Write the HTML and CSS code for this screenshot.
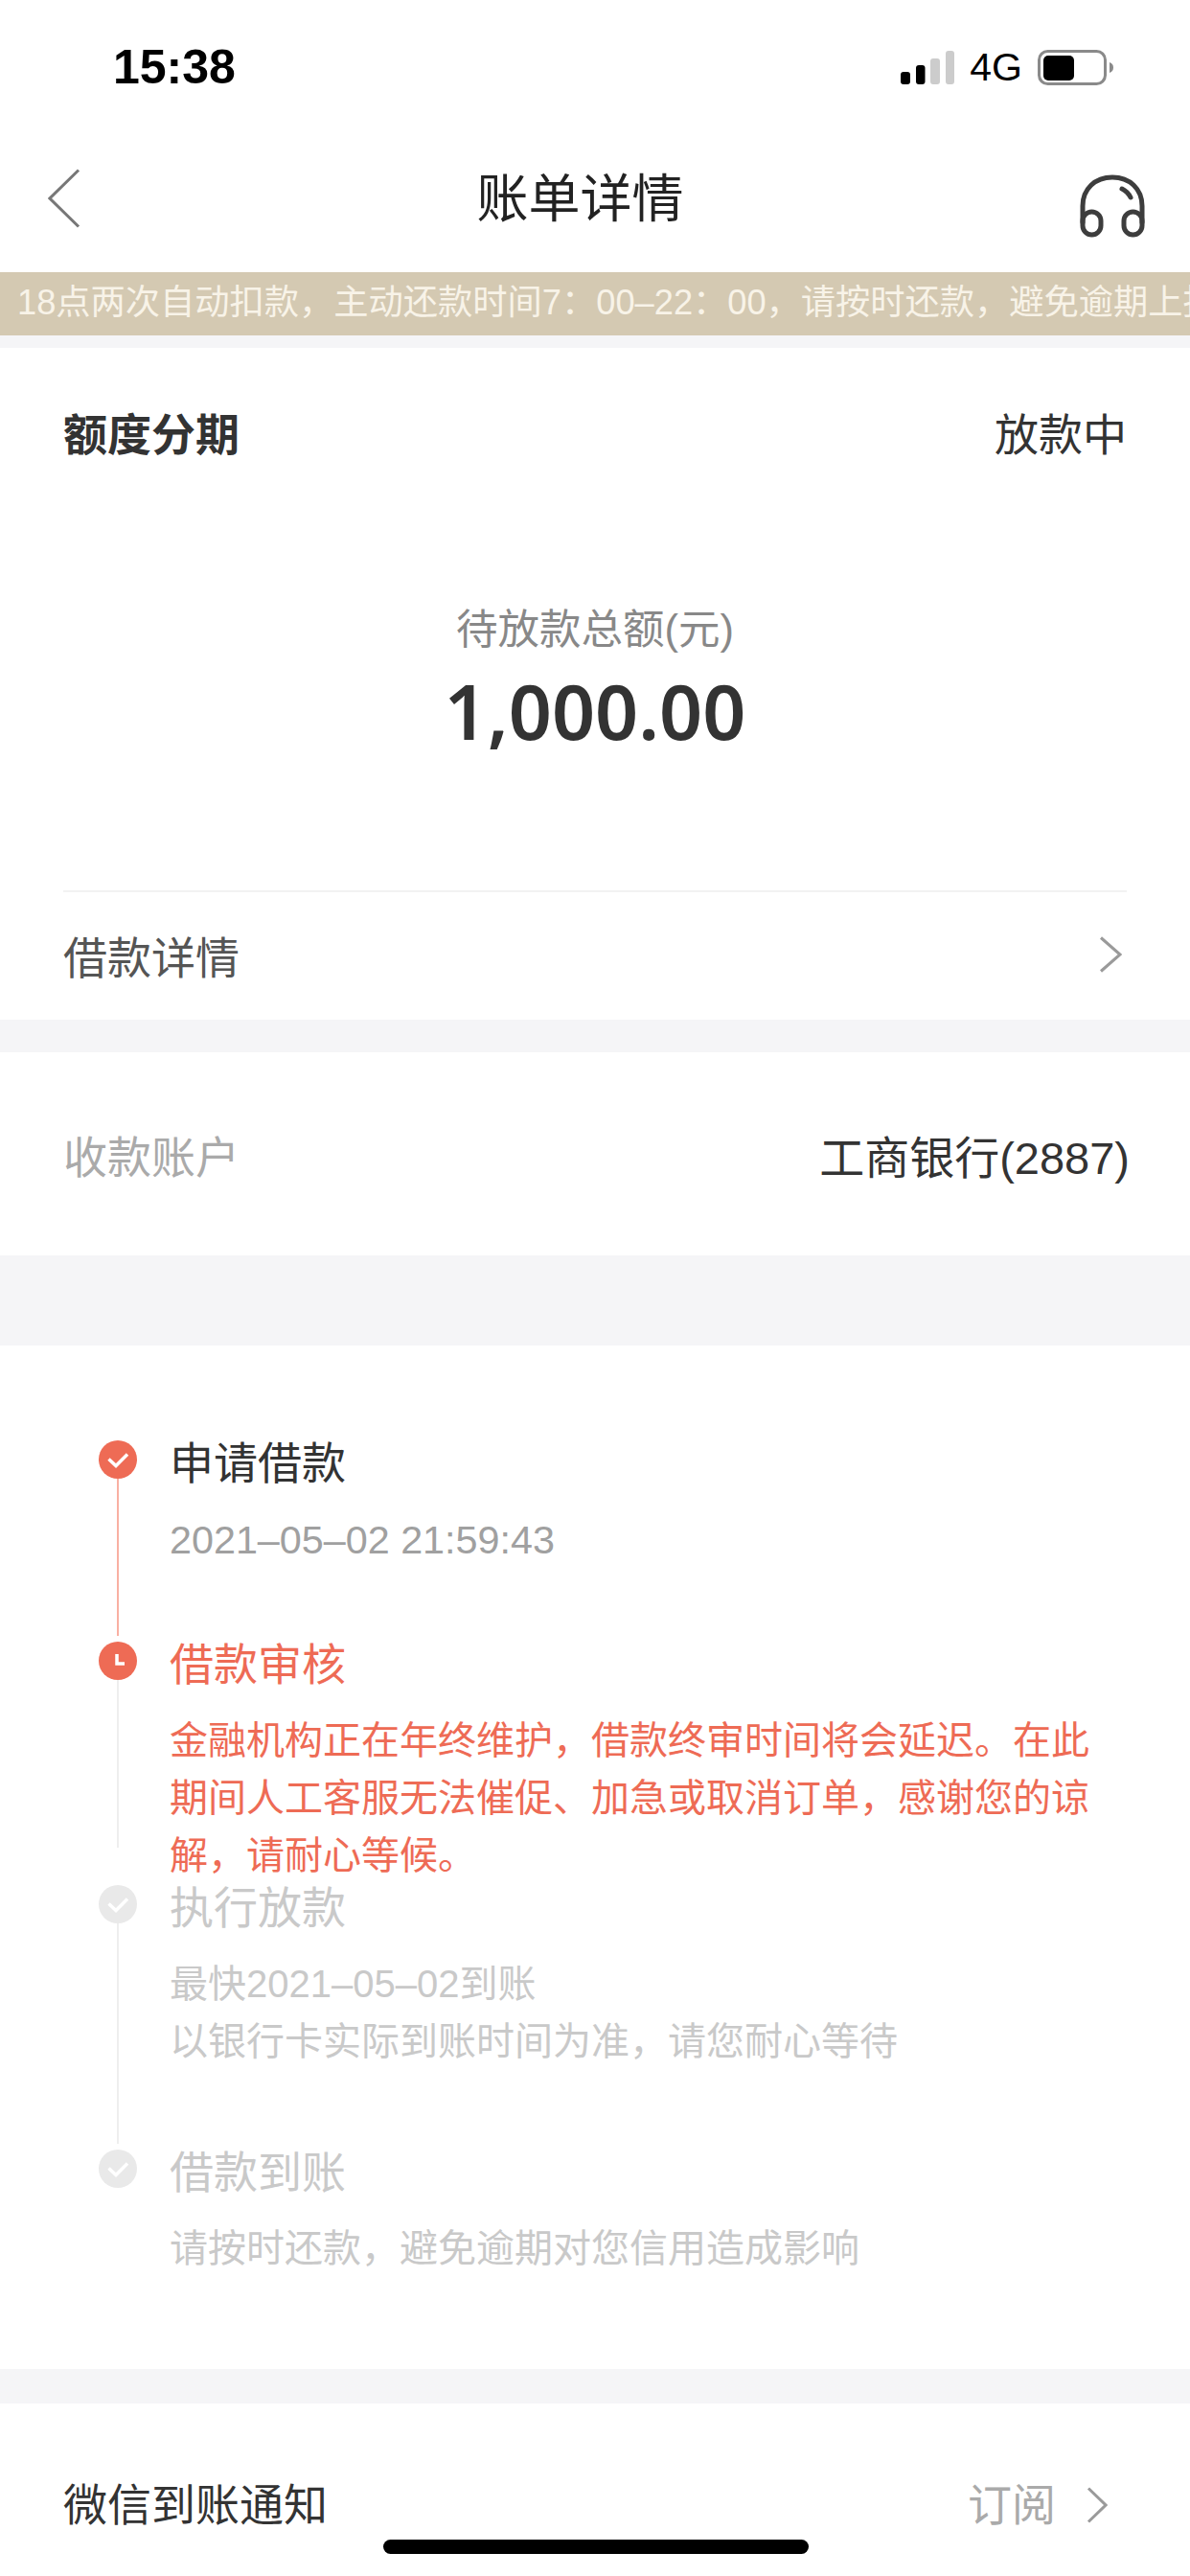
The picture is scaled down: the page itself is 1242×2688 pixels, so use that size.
FILE: index.html
```html
<!DOCTYPE html>
<html lang="zh-CN">
<head>
<meta charset="utf-8">
<title>账单详情</title>
<link rel="stylesheet" href="styles.css">
</head>
<body>
<div class="page">
  <header class="status">
    <span class="time">15:38</span>
    <div class="status-right">
      <svg class="signal" width="56" height="35" viewBox="0 0 56 35"><rect x="0" y="22" width="10" height="13" rx="3" fill="#000"/><rect x="16" y="15" width="9.5" height="20" rx="3" fill="#000"/><rect x="31" y="8" width="10" height="27" rx="3" fill="#ccc"/><rect x="47" y="0" width="9" height="35" rx="3" fill="#ccc"/></svg>
      <span class="net">4G</span>
      <svg class="battery" width="79" height="37" viewBox="0 0 79 37"><rect x="1.500" y="1.500" width="69" height="34" rx="9" fill="none" stroke="#8a8a8a" stroke-width="3"/><rect x="6" y="6" width="32" height="26" rx="5" fill="#000"/><path d="M75 13c3 1 4 3 4 5.500s-1 4.500-4 5.500z" fill="#8a8a8a"/></svg>
    </div>
  </header>
  <nav class="nav">
    <svg class="back" width="34" height="62" viewBox="0 0 34 62"><path d="M32 1.500 2 31l30 29.500" fill="none" stroke="#777" stroke-width="3"/></svg>
    <h1 class="title">账单详情</h1>
    <svg class="headset" width="68" height="66" viewBox="0 0 68 66"><g fill="none" stroke="#3d3d3d" stroke-width="5" stroke-linecap="round"><path d="M3 50V33C3 15 16 3 34 3s31 12 31 30v17"/><rect x="3" y="39" width="19" height="24" rx="9.500"/><rect x="46" y="39" width="19" height="24" rx="9.500"/><path d="M44 15c4 2 7 5 9 9"/></g></svg>
  </nav>
  <div class="notice">18点两次自动扣款，主动还款时间7：00–22：00，请按时还款，避免逾期上报</div>

  <section class="card card-main">
    <div class="row-head">
      <span class="type">额度分期</span>
      <span class="state">放款中</span>
    </div>
    <div class="summary">
      <div class="summary-label">待放款总额(元)</div>
      <div class="amount">1,000.00</div>
    </div>
    <div class="row-detail">
      <span class="detail-text">借款详情</span>
      <svg class="chev" width="24" height="38" viewBox="0 0 24 38"><path d="M2 1.500 22 19 2 36.500" fill="none" stroke="#9a9a9a" stroke-width="3"/></svg>
    </div>
  </section>

  <section class="card card-account">
    <span class="acct-label">收款账户</span>
    <span class="acct-value">工商银行(2887)</span>
  </section>

  <section class="card timeline">
    <div class="step step-1">
      <div class="rail">
        <svg class="dot" width="40" height="40" viewBox="0 0 40 40"><circle cx="20" cy="20" r="20" fill="#ee6b55"/><path d="M10.500 19.500 18 26.500 30 14.500" fill="none" stroke="#fff" stroke-width="3.500"/></svg>
        <div class="line line-on"></div>
      </div>
      <div class="body">
        <div class="step-title dark">申请借款</div>
        <div class="step-text step-date mid">2021–05–02 21:59:43</div>
      </div>
    </div>
    <div class="step step-2">
      <div class="rail">
        <svg class="dot" width="40" height="40" viewBox="0 0 40 40"><circle cx="20" cy="20" r="20" fill="#ee6b55"/><path d="M19 13v10h8" fill="none" stroke="#fff" stroke-width="3.500"/></svg>
        <div class="line line-off line-short"></div>
      </div>
      <div class="body">
        <div class="step-title orange">借款审核</div>
        <div class="step-text orange">金融机构正在年终维护，借款终审时间将会延迟。在此期间人工客服无法催促、加急或取消订单，感谢您的谅解，请耐心等候。</div>
      </div>
    </div>
    <div class="step step-3">
      <div class="rail">
        <svg class="dot" width="40" height="40" viewBox="0 0 40 40"><circle cx="20" cy="20" r="20" fill="#e9e9e9"/><path d="M10.500 19.500 18 26.500 30 14.500" fill="none" stroke="#fff" stroke-width="3.500"/></svg>
        <div class="line line-off"></div>
      </div>
      <div class="body">
        <div class="step-title faint">执行放款</div>
        <div class="step-text faint">最快2021–05–02到账<br>以银行卡实际到账时间为准，请您耐心等待</div>
      </div>
    </div>
    <div class="step step-4">
      <div class="rail">
        <svg class="dot" width="40" height="40" viewBox="0 0 40 40"><circle cx="20" cy="20" r="20" fill="#e9e9e9"/><path d="M10.500 19.500 18 26.500 30 14.500" fill="none" stroke="#fff" stroke-width="3.500"/></svg>
      </div>
      <div class="body">
        <div class="step-title faint">借款到账</div>
        <div class="step-text faint">请按时还款，避免逾期对您信用造成影响</div>
      </div>
    </div>
  </section>

  <section class="card card-wechat">
    <span class="wechat-label">微信到账通知</span>
    <div class="wechat-right">
      <span class="sub">订阅</span>
      <svg class="chev" width="22" height="38" viewBox="0 0 22 38"><path d="M2 1.500 20 19 2 36.500" fill="none" stroke="#9a9a9a" stroke-width="3"/></svg>
    </div>
  </section>
  <div class="home-bar"></div>
</div>
</body>
</html>
```

FILE: styles.css
```css
* { box-sizing: border-box; margin: 0; padding: 0; }
html, body { background: #f5f5f7; }
body {
  width: 1242px;
  height: 2688px;
  overflow: hidden;
  font-family: "Liberation Sans", "Noto Sans CJK SC", sans-serif;
}
.page { position: relative; width: 1242px; height: 2688px; overflow: hidden; }

.status {
  height: 140px;
  padding: 0 80px 0 118px;
  background: #fff;
  display: flex;
  justify-content: space-between;
  align-items: center;
}
.time { font-size: 50px; font-weight: 700; color: #000; }
.status-right { display: flex; align-items: center; }
.net { font-size: 41px; color: #000; margin: 0 16px 0 16px; }
.signal, .battery { display: block; }

.nav {
  height: 144px;
  padding: 0 47px 0 50px;
  background: #fff;
  display: flex;
  justify-content: space-between;
  align-items: center;
}
.title {
  font-size: 54px;
  font-weight: 400;
  color: #222;
  line-height: 70px;
  margin-top: -8px;
}
.back { margin-top: -10px; }
.headset { margin-top: 6px; }

.notice {
  height: 66px;
  line-height: 64px;
  padding-left: 18px;
  background: #d4c9b2;
  color: #f8f3e8;
  font-size: 36.25px;
  white-space: nowrap;
  overflow: hidden;
}

.card { background: #fff; }

.card-main { margin-top: 13px; height: 701px; padding: 0 66px; }
.row-head {
  height: 180px;
  display: flex;
  justify-content: space-between;
  align-items: center;
}
.type { font-size: 46px; font-weight: 700; color: #333; margin-top: -6px; }
.state { font-size: 46px; color: #333; margin-top: -6px; }
.summary {
  height: 388px;
  padding-top: 84px;
  border-bottom: 2px solid #f2f2f2;
  text-align: center;
}
.summary-label { font-size: 43.500px; line-height: 60px; color: #888; }
.amount { font-family: "Noto Sans", "Liberation Sans", sans-serif; font-size: 79px; line-height: 100px; font-weight: 600; color: #333; margin-top: 5px; }
.row-detail {
  height: 133px;
  display: flex;
  justify-content: space-between;
  align-items: center;
  padding: 0 5px 3px 0;
}
.detail-text { font-size: 46px; color: #555; }
.chev { display: block; }

.card-account {
  margin-top: 34px;
  height: 212px;
  padding: 0 63px 0 66px;
  display: flex;
  justify-content: space-between;
  align-items: center;
}
.acct-label { font-size: 46px; color: #aaa; }
.acct-value { font-size: 47px; color: #333; }

.timeline { margin-top: 94px; height: 1068px; padding: 93px 66px 0 103px; }
.step { display: flex; gap: 34px; }
.step-1 { height: 210px; }
.step-2 { height: 254px; }
.step-3 { height: 276px; }
.rail {
  width: 40px;
  flex: none;
  padding-top: 6px;
  display: flex;
  flex-direction: column;
  align-items: center;
}
.dot { display: block; flex: none; }
.line { width: 2px; flex: 1; }
.line-on { background: #f9b0a3; }
.line-off { background: #eee; }
.line-short { margin-bottom: 33px; }
.body { flex: 1; min-width: 0; }
.step-title { font-size: 46px; line-height: 60px; }
.step-text { font-size: 40px; line-height: 60px; margin-top: 19px; }
.step-date { font-size: 41.300px; margin-top: 20px; }
.dark { color: #333; }
.mid { color: #a0a0a0; }
.orange { color: #ee6b55; }
.faint { color: #c9c9c9; }

.card-wechat {
  margin-top: 36px;
  height: 180px;
  padding: 76px 86px 0 66px;
  display: flex;
  justify-content: space-between;
  align-items: flex-start;
}
.wechat-label { font-size: 46px; line-height: 60px; color: #333; }
.wechat-right { display: flex; align-items: center; gap: 32px; height: 60px; }
.sub { font-size: 46px; line-height: 60px; color: #aaa; }

.home-bar {
  position: absolute;
  left: 400px;
  bottom: 23px;
  width: 444px;
  height: 15px;
  background: #000;
  border-radius: 8px;
}
```
